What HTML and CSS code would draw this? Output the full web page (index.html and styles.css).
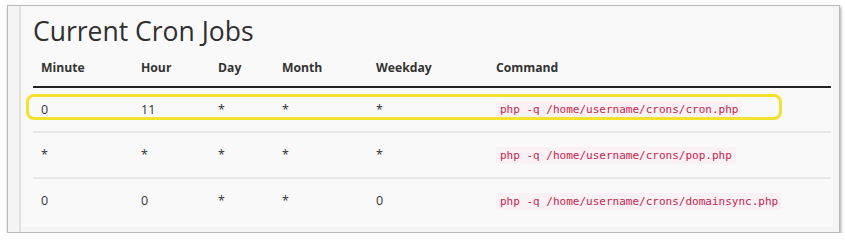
FILE: index.html
```html
<!DOCTYPE html>
<html>
<head>
<meta charset="utf-8">
<link rel="stylesheet" href="styles.css">
</head>
<body>
<div class="frame">
  <div class="sidebar"></div>
  <div class="content">
    <h1 class="title">Current Cron Jobs</h1>
    <div class="table-wrap">
      <table class="cron">
        <thead>
          <tr>
            <th class="c-min">Minute</th>
            <th class="c-hour">Hour</th>
            <th class="c-day">Day</th>
            <th class="c-month">Month</th>
            <th class="c-wd">Weekday</th>
            <th>Command</th>
          </tr>
        </thead>
        <tbody>
          <tr>
            <td>0</td><td>11</td><td>*</td><td>*</td><td>*</td>
            <td><code>php -q /home/username/crons/cron.php</code></td>
          </tr>
          <tr>
            <td>*</td><td>*</td><td>*</td><td>*</td><td>*</td>
            <td><code>php -q /home/username/crons/pop.php</code></td>
          </tr>
          <tr>
            <td>0</td><td>0</td><td>*</td><td>*</td><td>0</td>
            <td><code>php -q /home/username/crons/domainsync.php</code></td>
          </tr>
        </tbody>
      </table>
      <div class="highlight"></div>
    </div>
  </div>
</div>
</body>
</html>
```

FILE: styles.css
```css
html, body {
  margin: 0;
  padding: 0;
  background: #ffffff;
}
body {
  font-family: "Open Sans", "Liberation Sans", sans-serif;
  color: #333;
}
.frame {
  margin: 5px 0 0 7px;
  width: 831px;
  height: 226px;
  border: 1px solid #b9b9b9;
  box-shadow: 1px 2px 3px rgba(0,0,0,0.35);
  background: #f4f4f4;
  display: flex;
  box-sizing: content-box;
}
.sidebar {
  width: 11px;
  border-right: 2px solid #e1e1e1;
  flex: none;
}
.content {
  flex: 1;
  background: #f9f9f9;
  margin: 1px 6px 5px 0;
  padding-left: 12px;
}
.title {
  margin: 6px 0 0 0;
  font-size: 26.5px;
  font-weight: 400;
  line-height: 36px;
  color: #2f2f2f;
}
.table-wrap {
  position: relative;
  width: 798px;
}
.cron {
  width: 100%;
  border-collapse: collapse;
  font-size: 12.5px;
}
.cron th {
  text-align: left;
  font-weight: 700;
  font-size: 12.2px;
  padding: 9px 8px 8px;
  line-height: 20px;
  border-bottom: 2px solid #222;
  color: #333;
}
.c-min { width: 84px; }
.c-hour { width: 61px; }
.c-day { width: 48px; }
.c-month { width: 78px; }
.c-wd { width: 104px; }
.cron td {
  padding: 0 8px;
  height: 44px;
  line-height: 20px;
  border-top: 2px solid #e6e6e6;
  vertical-align: middle;
}
.cron tbody tr:first-child td {
  border-top: none;
  height: 43px;
}
.cron code {
  font-family: "DejaVu Sans Mono", "Liberation Mono", monospace;
  font-size: 11px;
  color: #c7254e;
  background: #f9f1f4;
  padding: 2px 4px;
  border-radius: 3px;
}
.highlight {
  position: absolute;
  left: -7px;
  top: 45px;
  width: 750px;
  height: 20px;
  border: 3px solid #f2e22c;
  border-radius: 8px;
  pointer-events: none;
}
```
